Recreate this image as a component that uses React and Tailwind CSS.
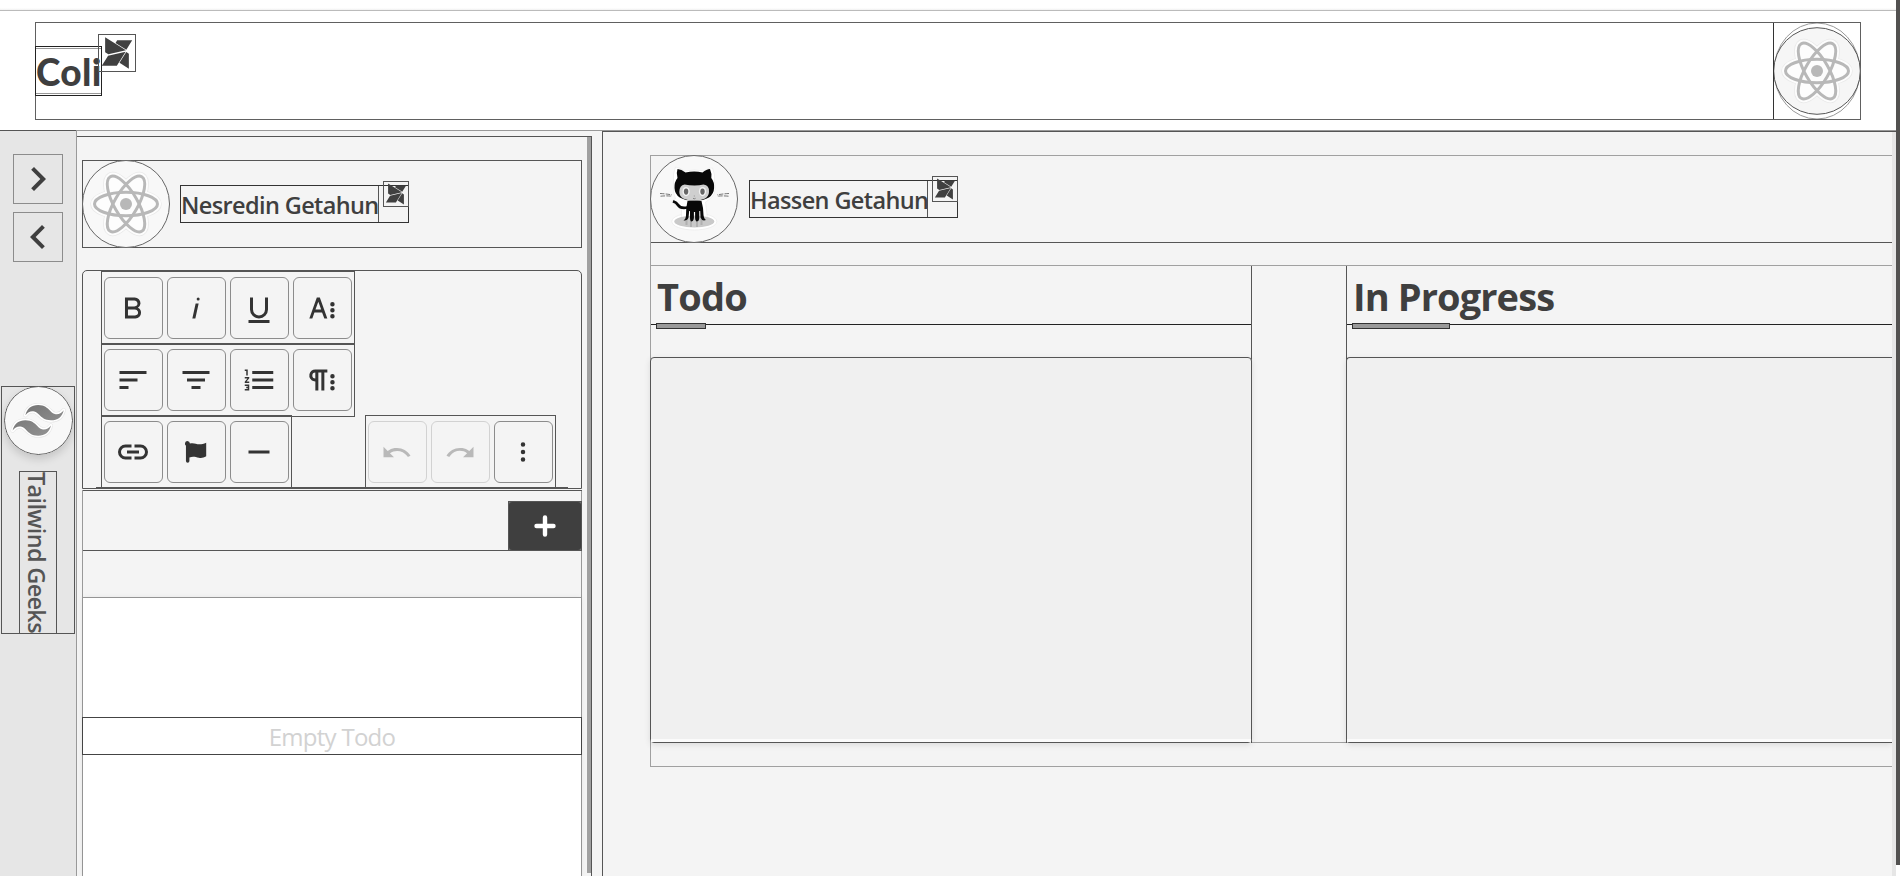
import { FaModx } from "react-icons/fa6";
import { MdNavigateBefore, MdNavigateNext } from "react-icons/md";

const ICONS = {
  bold: "M15.25,11.8h0A3.68,3.68,0,0,0,17,9a3.93,3.93,0,0,0-3.86-4H6.65V19h7a3.74,3.74,0,0,0,3.7-3.78V15.1A3.64,3.64,0,0,0,15.25,11.8ZM8.65,7h4.2a2.09,2.09,0,0,1,2,1.3,2.09,2.09,0,0,1-1.37,2.61,2.23,2.23,0,0,1-.63.09H8.65Zm4.6,10H8.65V13h4.6a2.09,2.09,0,0,1,2,1.3,2.09,2.09,0,0,1-1.37,2.61A2.23,2.23,0,0,1,13.25,17Z",
  italic: "M11.76,9h2l-2.2,10h-2Zm1.68-4a1,1,0,1,0,1,1,1,1,0,0,0-1-1Z",
  underline: "M19,20v2H5V20ZM16,5v8a4,4,0,0,1-8,0V5H6v8a6,6,0,0,0,12,0V5Z",
  moreText: "M13.55,19h2l-5-14h-2l-5,14h2l1.4-4h5.1Zm-5.9-6,1.9-5.2,1.9,5.2Zm12.8,4.5a1.5,1.5,0,1,1-1.5-1.5A1.5,1.5,0,0,1,20.45,17.5Zm0-4a1.5,1.5,0,1,1-1.5-1.5A1.5,1.5,0,0,1,20.45,13.5Zm0-4A1.5,1.5,0,1,1,18.95,8,1.5,1.5,0,0,1,20.45,9.5Z",
  alignLeft: "M3,18h6v-2H3Zm0-12v2h18V6Zm0,7h12v-2H3Z",
  alignCenter: "M9,18h6v-2H9ZM3,6v2h18V6Zm3,7h12v-2H6Z",
  orderedList: "M2.5,16h2v.5h-1v1h1V18h-2v1h3V15h-3Zm1-7h1V5h-2V6h1Zm-1,2H4.3L2.5,13.1V14h3V13H3.7l1.8-2.1V10h-3Zm5-5V8h14V6Zm0,12h14V16H7.5Zm0-5h14V11H7.5Z",
  paragraph: "M7.682,5a4.11,4.11,0,0,0-4.07,3.18,4,4,0,0,0,3.11,4.725h0l.027.005a3.766,3.766,0,0,0,.82.09v6h2V7h2V19h2V7h2V5ZM5.532,9a2,2,0,0,1,2-2v4A2,2,0,0,1,5.532,9Zm14.94,8.491a1.5,1.5,0,1,1-1.5-1.5A1.5,1.5,0,0,1,20.472,17.491Zm0-4a1.5,1.5,0,1,1-1.5-1.5A1.5,1.5,0,0,1,20.472,13.491Zm0-4a1.5,1.5,0,1,1-1.5-1.5A1.5,1.5,0,0,1,20.472,9.491Z",
  link: "M11,17H7A5,5,0,0,1,7,7h4V9H7a3,3,0,0,0,0,6h4ZM17,7H13V9h4a3,3,0,0,1,0,6H13v2h4A5,5,0,0,0,17,7Zm-1,4H8v2h8Z",
  flag: "M6.2,4.7a1.8,1.8,0,0,1,1.75,1.7C10.5,5.6,12,6.9,14.2,6.9c1.7,0,2.9-.5,4.6-1.1V14.8C17,15.9,15.6,16.1,13.9,15.8C11.7,15.4,10.2,14.7,7.6,15.6V18a1.15,1.15,0,0,1-2.3,0V7.9A1.8,1.8,0,0,1,6.2,4.7Z",
  rule: "M5,11h14v2H5Z",
  undo: "M10.4,9.4c-1.7,0.3-3.2,0.9-4.6,2L3,8.5v7h7l-2.7-2.7c3.7-2.6,8.8-1.8,11.5,1.9c0.2,0.2,0.3,0.5,0.4,0.7l1.8-0.9C18.8,10.8,14.6,8.7,10.4,9.4z",
  redo: "M13.6,9.4c1.7,0.3,3.2,0.9,4.6,2L21,8.5v7h-7l2.7-2.7C13,10.1,7.9,11,5.3,14.7c-0.2,0.2-0.3,0.5-0.4,0.7L3,14.5C5.1,10.8,9.3,8.7,13.6,9.4z",
  more: "M13.5,17a1.5,1.5,0,1,1-1.5-1.5A1.5,1.5,0,0,1,13.5,17Zm0-5a1.5,1.5,0,1,1-1.5-1.5A1.5,1.5,0,0,1,13.5,12Zm0-5a1.5,1.5,0,1,1-1.5-1.5A1.5,1.5,0,0,1,13.5,7Z",
};

function ToolButton({ name, disabled }) {
  return (
    <button
      className={
        disabled
          ? "flex h-[62px] w-[59px] items-center justify-center rounded-md border border-[#d2d2d2] text-[#b9b9b9]"
          : "flex h-[62px] w-[59px] items-center justify-center rounded-md border border-[#8c8c8c] text-[#333]"
      }
    >
      <svg viewBox="0 0 24 24" className="mr-px size-9" fill="currentColor">
        <path d={ICONS[name]} />
      </svg>
    </button>
  );
}

function ReactMark() {
  const angles = [0, 60, 120];
  return (
    <g transform="translate(44 44)">
      {angles.map((a) => (
        <ellipse key={a} rx="31.5" ry="11.5" transform={`rotate(${a})`} fill="#e9e9e9" stroke="#e9e9e9" strokeWidth="8.5" />
      ))}
      {angles.map((a) => (
        <ellipse key={a} rx="31.5" ry="11.5" transform={`rotate(${a})`} fill="#fdfdfd" stroke="#fdfdfd" strokeWidth="7" />
      ))}
      {angles.map((a) => (
        <ellipse key={a} rx="31.5" ry="11.7" transform={`rotate(${a})`} fill="none" stroke="#b8b8b8" strokeWidth="3" />
      ))}
      <circle r="6" fill="#b8b8b8" />
    </g>
  );
}

function Octocat() {
  return (
    <g transform="translate(.5 0)">
      <ellipse cx="43.8" cy="66.5" rx="22.5" ry="8.5" fill="#fff" stroke="#e8e8e8" strokeWidth="0.6" />
      <path d="M25 12Q28 12 34 16Q44 14 54 16Q59 12 62 13Q65 20 64 27Q67 40 58 45L55 47L57 64H31V54L22 48Q20 45 25 44Q22 38 23 28Q22 18 25 12Z" fill="#fff" stroke="#e8e8e8" strokeWidth="0.6" />
      <ellipse cx="43.8" cy="66.5" rx="20" ry="6" fill="#c9c9c9" />
      <path d="M36 62v8M40.5 62v10M46.5 62v10M51 62v8" stroke="#b0b0b0" strokeWidth="2" />
      <path d="M27 14Q31 14 35 17.5Q44 15.5 52 17.5Q56 14 59.5 14Q61.5 18.5 60.8 23Q64 27 63.6 33Q63 45.5 44 45.8Q24.5 45.5 24 33Q23.7 27 27 23Q25.5 18 27 14Z" fill="#080808" />
      <path d="M34 29.5Q39 30.5 44 30.5Q49 30.5 53 29.5Q59 30 58.5 37Q58 45.5 43.8 45.5Q29 45.5 28.8 37Q29 30 34 29.5Z" fill="#cfcfcf" />
      <ellipse cx="35.6" cy="36.6" rx="3.6" ry="4.6" fill="#f2f2f2" />
      <ellipse cx="52" cy="36.6" rx="3.6" ry="4.6" fill="#f2f2f2" />
      <ellipse cx="35.6" cy="36.6" rx="2.2" ry="3.1" fill="#666" />
      <ellipse cx="52" cy="36.6" rx="2.2" ry="3.1" fill="#666" />
      <path d="M42.5 43.3q1.3 1 2.6 0M43.8 40.6v.8" stroke="#555" strokeWidth="0.6" fill="none" />
      <path d="M22.5 46.2Q26 47.5 27.5 50Q30 54 37 52.5" fill="none" stroke="#080808" strokeWidth="2.8" />
      <path d="M37 46H51Q53 53 53 60Q53.5 64 55.5 65Q51.5 66.5 50 62.5L49.7 56L48.8 56V63Q48.5 66.5 46 66.5Q44.5 65 44.6 63V57H43.4V63Q43 66.5 40.5 66.5Q39.5 65.5 39.5 63V56L38.7 56L38 62.5Q37 66 33 65.5Q35.5 64 35.5 60Q35.5 52 37 46Z" fill="#080808" />
      <path d="M9.5 38.5q6 .3 12 1.4M10 41.2q6-.6 11.500 0M78.5 38.5q-6 .3-12 1.4M78 41.2q-6-.6-11.500 0" fill="none" stroke="#555" strokeWidth="0.8" strokeDasharray="4.5 1.2" />
    </g>
  );
}

function Avatar({ children }) {
  return (
    <svg viewBox="0 0 88 88" className="size-[88px] shrink-0">
      <circle cx="44" cy="44" r="43.5" fill="#f8f8f8" stroke="#666" />
      {children}
    </svg>
  );
}

function NameTag({ name, className, textClass }) {
  return (
    <div className={`relative flex h-[38px] border border-[#333] text-[23.5px] leading-[38px] font-semibold tracking-[-0.62px] whitespace-nowrap text-[#3f3f3f] ${className}`}>
      <div className={`h-9 border-r border-[#555] ${textClass}`}>{name}</div>
      <div className="absolute -top-[5px] -right-px flex size-[26px] items-center justify-center border border-[#555]">
        <FaModx className="size-6 shrink-0 text-[#404040]" />
      </div>
    </div>
  );
}

function Column({ title, className, barClass, titleClass, boxClass }) {
  return (
    <section className={className}>
      <div className="relative h-[59px] border-b border-[#222]">
        <h2 className={`pt-[3px] text-[38px] leading-[54px] font-bold whitespace-nowrap text-[#3f3f3f] ${titleClass}`}>{title}</h2>
        <div className={`absolute -bottom-[5px] left-[5px] h-[6px] border border-[#333] bg-[#999] ${barClass}`} />
      </div>
      <div className={`mt-8 h-[386px] border border-[#555] bg-[#f0f0f0] pt-[381px] shadow-[0_2px_6px_rgba(0,0,0,0.1)] ${boxClass}`}>
        <div className="h-[3px] bg-[#fbfbfb]" />
      </div>
    </section>
  );
}

export default function App() {
  return (
    <div className="flex h-[876px] w-[1900px] overflow-hidden bg-white font-['Open_Sans','Noto_Sans',sans-serif]">
      <div className="flex h-full w-[1896px] shrink-0 flex-col">
        <div className="h-[10px] shrink-0 bg-gradient-to-b from-white from-80% to-[#f1f1f1]" />
        <header className="h-[120px] shrink-0 border-t border-[#bbb] bg-white pt-[11px] pl-[35px]">
          <div className="flex h-[98px] w-[1826px] justify-between border border-[#606060]">
            <div className="flex">
              <div className="mt-[23px] -ml-px h-[50px] w-[67px] border border-[#222] py-px">
                <div className="h-[46px] border-y border-[#999] font-['Lato',sans-serif] text-[37px] leading-[46px] font-black tracking-[0.3px] text-[#3f3f3f]">Coli</div>
              </div>
              <div className="mt-[11px] -ml-1 flex size-[38px] items-center justify-center border border-[#555]">
                <FaModx className="size-9 shrink-0 text-[#404040]" />
              </div>
            </div>
            <div className="-mr-px flex h-[96px] w-[88px] border-l border-[#333]">
              <svg viewBox="0 0 88 96" className="h-[96px] w-[88px] shrink-0">
                <ellipse cx="43" cy="48" rx="43" ry="48" fill="none" stroke="#999" />
                <circle cx="43" cy="48" r="43.3" fill="#f6f6f6" stroke="#555" />
                <g transform="translate(-1 4)">
                  <ReactMark />
                </g>
              </svg>
            </div>
          </div>
        </header>
        <div className="flex min-h-0 flex-1">
          <aside className="flex w-[76px] shrink-0 flex-col border-t border-[#555] bg-[#e6e6e6]">
            <button className="mt-[23px] ml-[13px] flex size-[50px] items-center justify-center border border-[#8c8c8c]">
              <MdNavigateNext className="size-12 shrink-0 text-[#3f3f3f]" />
            </button>
            <button className="mt-2 ml-[13px] flex size-[50px] items-center justify-center border border-[#8c8c8c]">
              <MdNavigateBefore className="size-12 shrink-0 text-[#3f3f3f]" />
            </button>
            <div className="mt-[124px] ml-px h-[248px] w-[74px] border border-[#555]">
              <svg viewBox="0 0 69 69" className="-mt-px ml-0.5 size-[69px] rounded-full shadow-[0_4px_8px_rgba(0,0,0,0.15)]">
                <defs>
                  <linearGradient id="swoosh" x1="0" y1="0" x2="1" y2="1">
                    <stop offset="0" stopColor="#6f6f6f" />
                    <stop offset="1" stopColor="#989898" />
                  </linearGradient>
                </defs>
                <circle cx="34.5" cy="34.5" r="34" fill="#f8f8f8" stroke="#555" />
                {["halo", "rim", "mark"].map((layer) => (
                  <path
                    key={layer}
                    transform="translate(8.6 8.8) scale(2.13)"
                    d="M12 4.8c-3.2 0-5.2 1.6-6 4.8 1.2-1.6 2.6-2.2 4.2-1.8.913.228 1.565.89 2.288 1.624C13.666 10.618 15.027 12 18 12c3.2 0 5.2-1.6 6-4.8-1.2 1.6-2.6 2.2-4.2 1.8-.913-.228-1.565-.89-2.288-1.624C16.337 6.182 14.976 4.8 12 4.8zM6 12c-3.2 0-5.2 1.6-6 4.8 1.2-1.6 2.6-2.2 4.2-1.8.913.228 1.565.89 2.288 1.624C7.666 17.818 9.027 19.2 12 19.2c3.2 0 5.2-1.6 6-4.8-1.2 1.6-2.6 2.2-4.2 1.8-.913-.228-1.565-.89-2.288-1.624C10.337 13.382 8.976 12 6 12z"
                    fill={layer === "mark" ? "url(#swoosh)" : "#fff"}
                    stroke={layer === "halo" ? "#e6e6e6" : layer === "rim" ? "#fff" : "none"}
                    strokeWidth={layer === "halo" ? 2 : 1.5}
                    strokeLinejoin="round"
                  />
                ))}
              </svg>
              <div className="mt-4 ml-[17px] h-[163px] w-[38px] border border-[#555] text-[23.5px] leading-[39px] font-semibold tracking-[-0.68px] whitespace-nowrap text-[#555] [writing-mode:vertical-rl]">
                Tailwind Geeks
              </div>
            </div>
          </aside>

          <div className="w-[526px] shrink-0 border-t border-l border-[#999] bg-[#f4f4f4] pt-[5px]">
            <div className="flex h-full w-[515px] border-t border-r border-[#555] pl-[5px]">
              <div className="flex h-[739px] w-[500px] shrink-0 flex-col">
                <div className="mt-[23px] flex h-[88px] shrink-0 border border-[#555]">
                  <div className="-mt-px -ml-px">
                    <Avatar>
                      <ReactMark />
                    </Avatar>
                  </div>
                  <NameTag name="Nesredin Getahun" className="mt-[24px] ml-[10px] w-[229px]" textClass="w-[198px]" />
                </div>

                <div className="mt-[22px] h-[219px] shrink-0 rounded-t-[5px] border border-[#555] px-[13px]">
                  <div className="ml-[5px] flex h-[73px] w-[254px] gap-1 border border-[#555] px-0.5 pt-[5px]">
                    <ToolButton name="bold" />
                    <ToolButton name="italic" />
                    <ToolButton name="underline" />
                    <ToolButton name="moreText" />
                  </div>
                  <div className="ml-[5px] flex h-[73px] w-[254px] gap-1 border border-[#555] px-0.5 pt-1">
                    <ToolButton name="alignLeft" />
                    <ToolButton name="alignCenter" />
                    <ToolButton name="orderedList" />
                    <ToolButton name="paragraph" />
                  </div>
                  <div className="-mt-[2px] flex h-[73px] justify-between border-b border-[#555] pr-3 pl-[5px]">
                    <div className="flex w-[191px] gap-1 border border-b-0 border-[#555] px-0.5 pt-[5px]">
                      <ToolButton name="link" />
                      <ToolButton name="flag" />
                      <ToolButton name="rule" />
                    </div>
                    <div className="flex w-[191px] gap-1 border border-b-0 border-[#555] px-0.5 pt-[5px]">
                      <ToolButton name="undo" disabled />
                      <ToolButton name="redo" disabled />
                      <ToolButton name="more" />
                    </div>
                  </div>
                </div>

                <div className="mt-px flex min-h-0 flex-1 flex-col border-x border-[#999]">
                  <div className="-mr-px flex h-[61px] shrink-0 items-end justify-end border-y border-[#555]">
                    <div className="-mb-px h-[50px] w-[74px] border border-[#555] bg-[#777]">
                      <button className="flex h-12 w-[72px] items-center justify-center rounded-[3px] bg-[#3f3f3f]">
                        <svg viewBox="0 0 24 24" className="size-6" stroke="#fff" strokeWidth="4.4" strokeLinecap="round">
                          <path d="M12 3.5v17M3.5 12h17" />
                        </svg>
                      </button>
                    </div>
                  </div>
                  <div className="h-[47px] shrink-0 border-b border-[#999]" />
                  <div className="min-h-0 flex-1 bg-white pt-[119px] shadow-[0_0_6px_rgba(0,0,0,0.08)]">
                    <div className="-mx-px h-[38px] border border-[#444] text-center text-2xl leading-[38px] tracking-[-0.72px] text-[#d2d2d2]">Empty Todo</div>
                  </div>
                </div>
              </div>
              <div className="ml-[5px] h-[736px] w-1 shrink-0 bg-[#a0a0a0]" />
            </div>
          </div>

          <main className="flex w-[1294px] shrink-0 border-t border-[#999]">
            <div className="flex w-full border-t border-l border-[#555] bg-[#f4f4f4]">
              <div className="mt-[23px] ml-[47px] h-[612px] w-[1242px] border-y border-l border-[#a0a0a0]">
                <div className="flex h-[87px] border-b border-[#555]">
                  <div className="-mt-px -ml-px">
                    <Avatar>
                      <Octocat />
                    </Avatar>
                  </div>
                  <NameTag name="Hassen Getahun" className="mt-[24px] ml-[11px] w-[209px]" textClass="w-[178px]" />
                </div>
                <div className="mt-[22px] flex border-t border-[#a0a0a0]">
                  <Column title="Todo" className="h-[477px] w-[601px] border-r border-[#555]" titleClass="pl-[6px] tracking-[-0.8px]" barClass="w-[50px]" boxClass="-mr-px -ml-px rounded-[4px]" />
                  <div className="w-[94px] border-b border-[#a0a0a0]" />
                  <Column title="In Progress" className="h-[477px] w-[546px] border-l border-[#555]" titleClass="pl-[6px] tracking-[-0.9px]" barClass="w-[98px]" boxClass="-ml-px rounded-l-[4px] border-r-0" />
                </div>
              </div>
              <div className="w-1 bg-[#e6e6e6]" />
            </div>
          </main>
        </div>
      </div>
      <div className="h-[865px] w-1 shrink-0 bg-[#525150]" />
    </div>
  );
}
